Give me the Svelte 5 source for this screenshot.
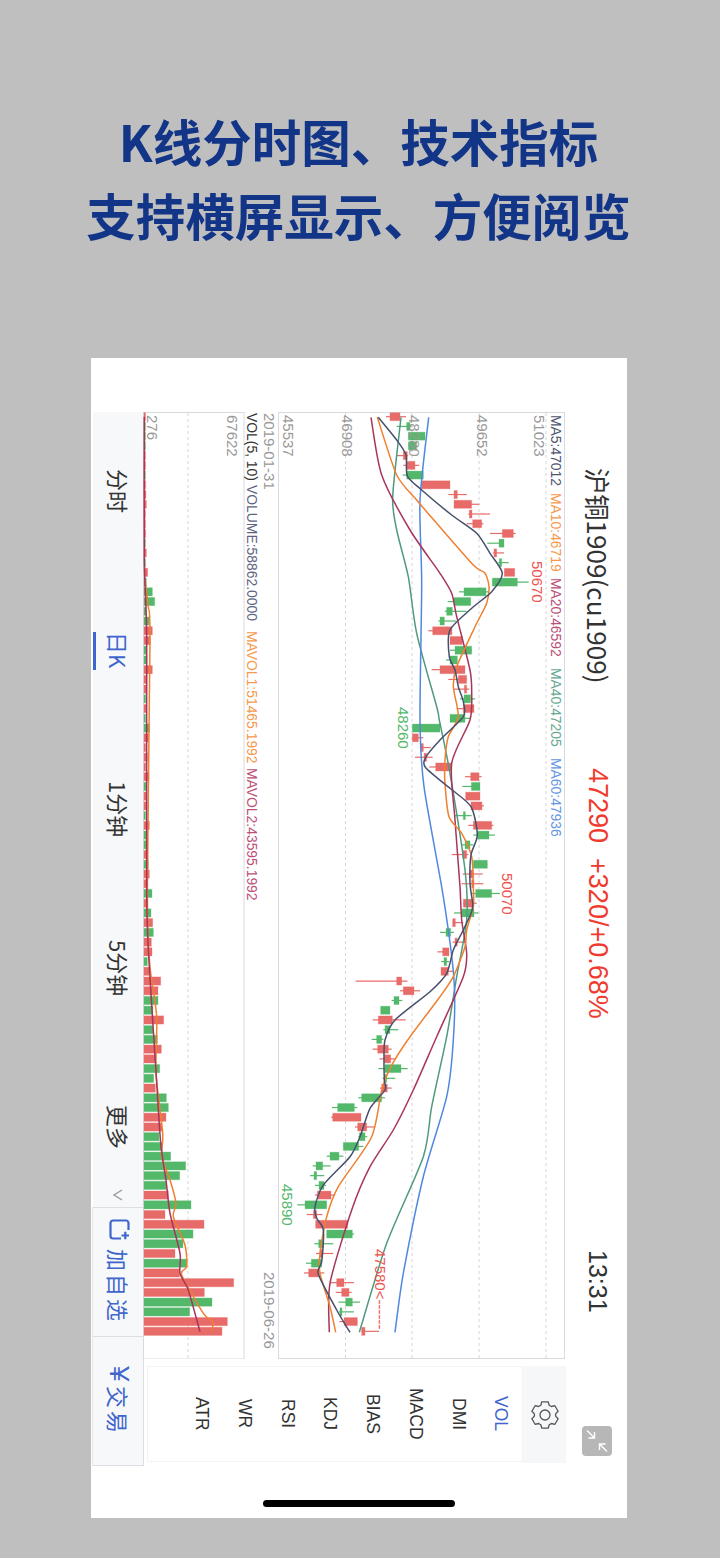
<script>
  // candle rows read off the chart: [low, bodyLow, bodyHigh, high, red?] as page x
  const rowY = (i) => 416.7 + 9.73 * i;
  const raw = [
    [348,360,390,408,1],[380,410,420,425,0],[415,415,465,465,0],[415,415,440,440,0],[380,400,412,415,1],
    [400,410,435,448,1],[398,410,460,460,0],[455,455,540,540,1],[535,552,562,590,1],[552,552,605,628,1],
    [595,598,606,660,1],[590,608,635,640,1],[660,697,730,737,1],[652,687,702,702,0],[668,672,680,702,1],
    [685,688,695,716,0],[703,703,734,734,1],[667,667,742,776,0],[567,582,648,655,0],[533,552,602,602,0],
    [525,530,547,590,0],[505,510,523,558,0],[475,488,546,546,1],[540,540,577,577,1],[540,555,605,605,0],
    [528,540,562,562,0],[485,510,585,585,1],[535,565,590,590,1],[550,583,590,598,1],[570,582,602,615,0],
    [560,580,612,612,1],[540,540,585,600,0],[427,427,510,510,0],[427,427,445,460,1],[450,452,460,482,1],
    [435,462,470,488,1],[478,497,545,545,1],[585,602,627,635,1],[577,604,630,630,0],[587,587,630,630,1],
    [603,603,636,642,1],[555,580,586,605,0],[595,610,665,670,1],[610,622,657,675,0],[575,585,600,610,0],
    [545,578,590,595,1],[610,610,652,652,0],[578,600,610,638,1],[575,605,612,640,1],[605,617,665,690,0],
    [580,580,610,620,1],[552,575,612,625,0],[548,548,556,580,1],[510,528,542,552,0],[548,555,562,585,1],
    [502,518,537,537,1],[513,522,530,537,0],[513,513,535,550,1],[257,380,395,412,1],[390,400,432,450,1],
    [365,372,387,397,0],[332,332,360,360,0],[308,325,367,407,1],[340,345,360,385,0],[305,320,335,340,0],
    [308,323,355,365,1],[328,343,362,378,1],[325,345,393,413,0],[338,345,350,376,0],[330,335,352,365,1],
    [265,275,335,345,0],[186,203,253,262,0],[183,188,273,273,1],[255,263,290,315,1],[265,268,285,292,0],
    [220,220,266,280,0],[170,180,207,220,0],[128,138,158,182,0],[120,132,140,163,0],[135,147,162,168,0],
    [135,142,183,195,1],[82,105,170,170,0],[110,130,140,157,1],[137,137,233,233,1],[170,170,247,252,0],
    [133,146,160,190,0],[138,150,158,190,1],[108,124,155,155,0],[102,116,148,163,1],[180,200,222,252,1],
    [197,215,237,245,1],[205,227,247,270,0],[207,210,216,252,0],[208,222,262,262,1],[275,275,285,327,1]
  ];
  const mainX = (v) => v / 3 - 8; // zoomed reading to x inside the price panel
  const candles = raw.map((c, i) => ({
    y: rowY(i) - 412,
    lo: mainX(c[0]),
    bl: mainX(c[1]),
    bh: mainX(c[2]),
    hi: mainX(c[3]),
    color: c[4] ? '#e76b68' : '#53b86a'
  }));

  // catmull-rom through the readings so the averages curve instead of kinking
  function smooth(pts) {
    let d = `M${pts[0][0].toFixed(1)} ${pts[0][1].toFixed(1)}`;
    for (let i = 0; i < pts.length - 1; i++) {
      const p0 = pts[i - 1] ?? pts[i];
      const p1 = pts[i];
      const p2 = pts[i + 1];
      const p3 = pts[i + 2] ?? p2;
      const c1x = p1[0] + (p2[0] - p0[0]) / 8;
      const c1y = p1[1] + (p2[1] - p0[1]) / 8;
      const c2x = p2[0] - (p3[0] - p1[0]) / 8;
      const c2y = p2[1] - (p3[1] - p1[1]) / 8;
      d += `C${c1x.toFixed(1)} ${c1y.toFixed(1)} ${c2x.toFixed(1)} ${c2y.toFixed(1)} ${p2[0].toFixed(1)} ${p2[1].toFixed(1)}`;
    }
    return d;
  }

  // price moving averages, three readings per line (top, middle, bottom of the chart)
  const path = (...parts) =>
    smooth(parts.flatMap(([top, pts]) => pts.map(([x, y]) => [x / 3 - 8, top + y / 3 - 412])));

  const maLines = [
    {
      color: '#4f9a7f',
      d: path(
        [400, [[393,52],[368,290],[380,390],[415,530],[440,700],[500,920]]],
        [720, [[508,0],[540,160],[585,450],[590,600],[560,770],[530,950]]],
        [1040, [[485,200],[460,350],[350,610],[268,877]]]
      )
    },
    {
      color: '#4f88e0',
      d: path(
        [400, [[476,52],[450,300],[455,550],[450,960]]],
        [720, [[462,200],[520,530],[552,780],[550,960]]],
        [1040, [[530,170],[460,410],[400,700],[375,877]]]
      )
    },
    {
      color: '#a8355c',
      d: path(
        [400, [[303,52],[335,225],[420,390],[510,520],[545,580],[560,650],[600,810],[605,880],[600,960]]],
        [720, [[545,130],[555,300],[570,500],[575,600],[590,700],[580,770],[500,950]]],
        [1040, [[430,150],[370,270],[300,380],[245,510],[180,730],[178,877]]]
      )
    },
    {
      color: '#ef8030',
      d: path(
        [400, [[322,52],[380,225],[440,300],[500,370],[610,495],[645,520],[657,560],[650,610],[615,680],[560,800],[550,860],[565,950]]],
        [720, [[535,50],[525,120],[525,190],[537,290],[575,340],[605,410],[610,500],[610,560],[590,630],[585,680],[550,770],[510,830],[413,960]]],
        [1040, [[360,85],[335,150],[305,290],[205,440],[170,530],[150,640],[150,700],[180,800],[197,877]]]
      )
    },
    {
      color: '#46506e',
      d: path(
        [400, [[325,52],[380,120],[408,165],[412,228],[455,270],[545,345],[620,400],[660,460],[697,520],[665,575],[605,625],[540,690],[538,770],[555,810],[565,860],[580,905],[580,950]]],
        [720, [[510,60],[467,112],[467,143],[540,205],[603,260],[622,345],[603,405],[600,490],[608,550],[605,575],[580,630],[550,690],[530,760],[480,815],[375,900],[345,960]]],
        [1040, [[342,60],[343,120],[345,150],[300,205],[270,290],[240,350],[160,435],[135,500],[140,535],[160,570],[155,665],[145,702],[200,810],[240,877]]]
      )
    }
  ];

  const priceGrid = [67.5, 134, 201, 268];
  const priceAxis = [
    { x: 255.5, text: '51023' },
    { x: 198.5, text: '49652' },
    { x: 131, text: '48280' },
    { x: 64, text: '46908' },
    { x: 4.5, text: '45537' }
  ];
  const priceLegend = [
    { y: 3, text: 'MA5:47012', color: '#4d5672' },
    { y: 81, text: 'MA10:46719', color: '#f5984e' },
    { y: 166, text: 'MA20:46592', color: '#bb4f78' },
    { y: 256, text: 'MA40:47205', color: '#66a892' },
    { y: 346, text: 'MA60:47936', color: '#6496e4' }
  ];
  const marks = [
    { x: 253.5, y: 149, text: '50670', color: '#ef5350' },
    { x: 120, y: 295, text: '48260', color: '#53b86a' },
    { x: 224, y: 461, text: '50070', color: '#ef5350' },
    { x: 4, y: 772, text: '45890', color: '#53b86a' },
    { x: 97, y: 837, text: '47580<------', color: '#ef5350' }
  ];

  // volume bar ends as read off the zoom, colours come from the candle row
  const volEnds = [
    165,165,165,165,167,167,167,168,169,170,167,167,168,167,170,166,174,170,188,195,
    170,178,188,182,170,172,188,172,170,168,170,165,180,176,168,173,168,178,170,171,
    171,166,179,172,170,174,176,179,170,187,175,184,189,191,185,187,173,178,213,205,
    205,190,222,190,203,215,198,210,192,197,230,236,229,217,208,218,243,288,270,230,
    236,304,226,343,310,280,256,292,270,432,344,367,300,413,397
  ];
  const bars = volEnds.map((end, i) => ({
    y: rowY(i) - 412 - 4.1,
    w: Math.max(1.5, (end - 163) / 3),
    color: raw[i][4] ? '#e76b68' : '#53b86a'
  }));

  const volPath = (...parts) =>
    smooth(parts.flatMap(([top, pts]) => pts.map(([x, y]) => [x / 3 - 53, top + y / 3 - 412])));
  const mavol1 = volPath(
    [400, [[165,540],[175,620],[180,720]]],
    [700, [[172,600],[180,800],[200,950],[198,1120],[218,1300],[215,1370],[240,1440]]],
    [1170, [[258,100],[250,140],[285,225],[290,290],[275,315],[340,430],[368,455],[365,485]]]
  );
  const mavol2 = volPath(
    [400, [[163,50],[163,480],[170,720]]],
    [700, [[170,580],[178,800],[197,1100],[212,1330],[228,1440]]],
    [1170, [[240,130],[270,250],[270,310],[295,360],[330,485]]]
  );
  const volLegend = [
    { y: 1, text: 'VOL(5, 10)', color: '#333' },
    { y: 73, text: 'VOLUME:58862.0000', color: '#5c6482' },
    { y: 219, text: 'MAVOL1:51465.1992', color: '#f5984e' },
    { y: 356, text: 'MAVOL2:43595.1992', color: '#bb4f78' }
  ];

  const tabs = ['分时', '日K', '1分钟', '5分钟', '更多'];
  const indicators = ['VOL', 'DMI', 'MACD', 'BIAS', 'KDJ', 'RSI', 'WR', 'ATR'];
</script>

<div class="page">
  <h1 class="headline">
    <span>K线分时图、技术指标</span>
    <span>支持横屏显示、方便阅览</span>
  </h1>

  <div class="screen">
    <aside class="sidebar">
      <nav class="tabs">
        {#each tabs as tab, i}
          <div class="tab" class:active={i === 1}>{tab}</div>
        {/each}
      </nav>
      <div class="caret">
        <svg width="10" height="12" viewBox="0 0 10 12"><path d="M9 1 1 6l8 5" fill="none" stroke="#9a9a9a" stroke-width="1.3" /></svg>
      </div>
      <div class="action">
        <svg class="star" width="21" height="21" viewBox="0 0 21 21">
          <path d="M19.500 11V4A2.500 2.500 0 0 0 17 1.500H4A2.500 2.500 0 0 0 1.500 4v13A2.500 2.500 0 0 0 4 19.500h8" fill="none" stroke="#3f66cc" stroke-width="2.200" />
          <path d="M12.500 16.500h7.500M16.300 12.800v7.500" fill="none" stroke="#3f66cc" stroke-width="2.200" />
        </svg>
        <span class="label">加自选</span>
      </div>
      <div class="action trade">
        <span class="yen">¥</span>
        <span class="label">交易</span>
      </div>
    </aside>

    <svg class="vol" width="135" height="947" viewBox="0 0 135 947">
      <rect x="0.500" y="0.500" width="100.500" height="946.500" fill="#fff" stroke="#d8dae0" />
      <line x1="45" y1="1" x2="45" y2="947" class="grid" />
      {#each bars as bar}
        <rect x="1" y={bar.y} width={bar.w} height="8.200" fill={bar.color} stroke={bar.color} stroke-opacity="0.3" stroke-width="1" />
      {/each}
      <path d={mavol1} class="ma" stroke="#ef8030" />
      <path d={mavol2} class="ma" stroke="#a8355c" />
      <text transform="rotate(90 3.500 3)" x="3.500" y="3" class="axis">276</text>
      <text transform="rotate(90 83.500 3)" x="83.500" y="3" class="axis">67622</text>
      {#each volLegend as item}
        <text transform="rotate(90 103.500 {item.y})" x="103.500" y={item.y} class="legend" fill={item.color}>{item.text}</text>
      {/each}
      <text transform="rotate(90 121 1)" x="121" y="1" class="axis">2019-01-31</text>
      <text transform="rotate(90 121 860)" x="121" y="860" class="axis">2019-06-26</text>
    </svg>

    <svg class="price" width="287" height="947" viewBox="0 0 287 947">
      <rect x="0.500" y="0.500" width="286" height="946" fill="#fff" stroke="#d8dae0" />
      {#each priceGrid as x}
        <line x1={x} y1="1" x2={x} y2="947" class="grid" />
      {/each}
      {#each candles as c}
        <line x1={c.lo} y1={c.y} x2={c.hi} y2={c.y} stroke={c.color} stroke-width="1.200" />
        <rect x={c.bl} y={c.y - 4} width={Math.max(c.bh - c.bl, 1)} height="8" fill={c.color} stroke={c.color} stroke-opacity="0.3" stroke-width="1" />
      {/each}
      {#each maLines as line}
        <path d={line.d} class="ma" stroke={line.color} />
      {/each}
      {#each priceAxis as item}
        <text transform="rotate(90 {item.x} 3)" x={item.x} y="3" class="axis">{item.text}</text>
      {/each}
      {#each priceLegend as item}
        <text transform="rotate(90 272.500 {item.y})" x="272.500" y={item.y} class="legend" fill={item.color}>{item.text}</text>
      {/each}
      {#each marks as m}
        <text transform="rotate(90 {m.x} {m.y})" x={m.x} y={m.y} class="mark" fill={m.color}>{m.text}</text>
      {/each}
    </svg>

    <header class="quote">
      <span class="name">沪铜1909(cu1909)</span>
      <span class="change">47290&nbsp;&nbsp;+320/+0.68%</span>
      <span class="clock">13:31</span>
    </header>

    <div class="tools">
      <div class="indicators">
        {#each [...indicators].reverse() as name}
          <span class="indicator" class:current={name === 'VOL'}>{name}</span>
        {/each}
      </div>
      <div class="gear">
        <svg width="30" height="30" viewBox="0 0 30 30" fill="none" stroke="#555" stroke-width="1.300">
          <circle cx="15" cy="15" r="5" />
          <path d="M11.800 1.800h6.400l1 3.400 2.200 1.300 3.500-.8 3.200 5.600-2.500 2.600v2.200l2.500 2.600-3.200 5.600-3.500-.8-2.200 1.300-1 3.400h-6.400l-1-3.400-2.200-1.300-3.500.8-3.200-5.600 2.500-2.600v-2.200L1.900 11.300l3.200-5.600 3.500.8 2.200-1.300z" stroke-linejoin="round" />
        </svg>
      </div>
      <button class="collapse" aria-label="collapse">
        <svg width="30" height="30" viewBox="0 0 30 30" fill="none" stroke="#fff" stroke-width="1.400">
          <path d="M5 4.500 12.500 12M6.500 12h6V6M25 25.500 17.500 18M23.500 18h-6v6" />
        </svg>
      </button>
    </div>

    <div class="home-bar"></div>
  </div>
</div>

<style>
  :global(body) {
    margin: 0;
    background: #bfbfbf;
  }

  .page {
    width: 720px;
    height: 1558px;
    padding-top: 104px;
    box-sizing: border-box;
    background: #bfbfbf;
    font-family: 'Liberation Sans', 'Noto Sans CJK SC', sans-serif;
  }

  .headline {
    display: flex;
    flex-direction: column;
    align-items: center;
    margin: 0 0 0 -3px;
    height: 254px;
    font-family: 'Noto Sans CJK SC', sans-serif;
    font-size: 49.500px;
    font-weight: 700;
    line-height: 74px;
    color: #133587;
  }

  .screen {
    position: relative;
    display: grid;
    grid-template-columns: 50px 135px 287px 62px;
    grid-template-rows: 947px 107px 105px;
    align-content: start;
    width: 536px;
    height: 1160px;
    margin-left: 91px;
    padding: 54px 0 0 2px;
    box-sizing: border-box;
    background: #fff;
    overflow: hidden;
  }

  .sidebar {
    grid-row: 1 / 3;
    display: flex;
    flex-direction: column;
    height: 1054px;
    background: #f7f8fa;
  }

  .tabs {
    display: flex;
    flex-direction: column;
    height: 771px;
  }

  .tab {
    display: flex;
    align-items: center;
    justify-content: center;
    height: 159px;
    flex: none;
    padding-left: 2px;
    writing-mode: vertical-rl;
    text-orientation: sideways;
    font-size: 22px;
    color: #333;
    font-family: 'Noto Sans CJK SC', sans-serif;
  }

  .tab.active {
    color: #3f66cc;
    position: relative;
  }

  .tab.active::before {
    content: '';
    position: absolute;
    left: 0;
    width: 3px;
    height: 38px;
    background: #3f66cc;
  }

  .caret {
    display: flex;
    align-items: center;
    justify-content: center;
    height: 24px;
  }

  .action {
    display: flex;
    flex-direction: column;
    align-items: center;
    justify-content: center;
    flex: none;
    height: 129px;
    padding-left: 2px;
    box-sizing: border-box;
    border: solid #dcdee3;
    border-width: 1px 0 0 0;
    font-family: 'Noto Sans CJK SC', sans-serif;
    font-size: 22px;
    color: #3f66cc;
    background: #f7f8fa;
    box-shadow: 1px 0 0 #dcdee3, -1px 0 0 #e6e7ea;
  }

  .star {
    margin-bottom: 9px;
  }

  .label {
    writing-mode: vertical-rl;
    text-orientation: sideways;
    letter-spacing: 3px;
  }

  .trade {
    height: 130px;
    border-bottom-width: 1px;
  }

  .yen {
    writing-mode: vertical-rl;
    text-orientation: sideways;
    font-family: 'Liberation Sans', sans-serif;
    font-size: 28px;
    line-height: 28px;
    margin-bottom: 4px;
  }

  .vol,
  .price {
    display: block;
  }

  .price {
    grid-column: 3;
  }

  .grid {
    stroke: #d6d6d6;
    stroke-width: 1;
    stroke-dasharray: 3 3;
  }

  .ma {
    fill: none;
    stroke-width: 1.500;
    stroke-linejoin: round;
  }

  .axis {
    fill: #999;
    font-size: 15px;
  }

  .legend {
    font-size: 13.900px;
  }

  .mark {
    font-size: 15px;
  }

  .quote {
    grid-column: 4;
    grid-row: 1;
    position: relative;
    writing-mode: vertical-rl;
    text-orientation: sideways;
    font-family: 'Liberation Sans', 'Noto Sans CJK SC', sans-serif;
    color: #333;
    line-height: 58px;
  }

  .name {
    position: absolute;
    top: 56px;
    font-size: 26.200px;
    font-family: 'Noto Sans CJK SC', sans-serif;
  }

  .change {
    position: absolute;
    top: 356px;
    color: #f03a2e;
    font-size: 27px;
  }

  .clock {
    position: absolute;
    top: 838px;
    font-size: 25px;
  }

  .tools {
    grid-column: 2 / 5;
    grid-row: 2;
    position: relative;
    display: flex;
    align-items: flex-start;
    margin: 7px 0 0 4px;
  }

  .indicators {
    display: flex;
    width: 376px;
    height: 96px;
    box-sizing: border-box;
    border: 1px solid #f2f3f5;
    padding-left: 32px;
    background: #fff;
  }

  .indicator {
    width: 42.800px;
    flex: none;
    display: flex;
    align-items: center;
    justify-content: center;
    writing-mode: vertical-rl;
    text-orientation: sideways;
    font-size: 17.500px;
    color: #333;
  }

  .indicator.current {
    color: #3f66cc;
  }

  .gear {
    display: flex;
    align-items: center;
    justify-content: center;
    width: 43px;
    height: 97px;
    background: #f6f7f9;
  }

  .collapse {
    position: absolute;
    left: 435px;
    top: 60px;
    width: 30px;
    height: 30px;
    padding: 0;
    border: 0;
    border-radius: 4px;
    background: #b7b7b7;
  }

  .collapse svg {
    display: block;
  }

  .home-bar {
    position: absolute;
    left: 172px;
    top: 1142px;
    width: 192px;
    height: 7px;
    border-radius: 4px;
    background: #000;
  }
</style>
